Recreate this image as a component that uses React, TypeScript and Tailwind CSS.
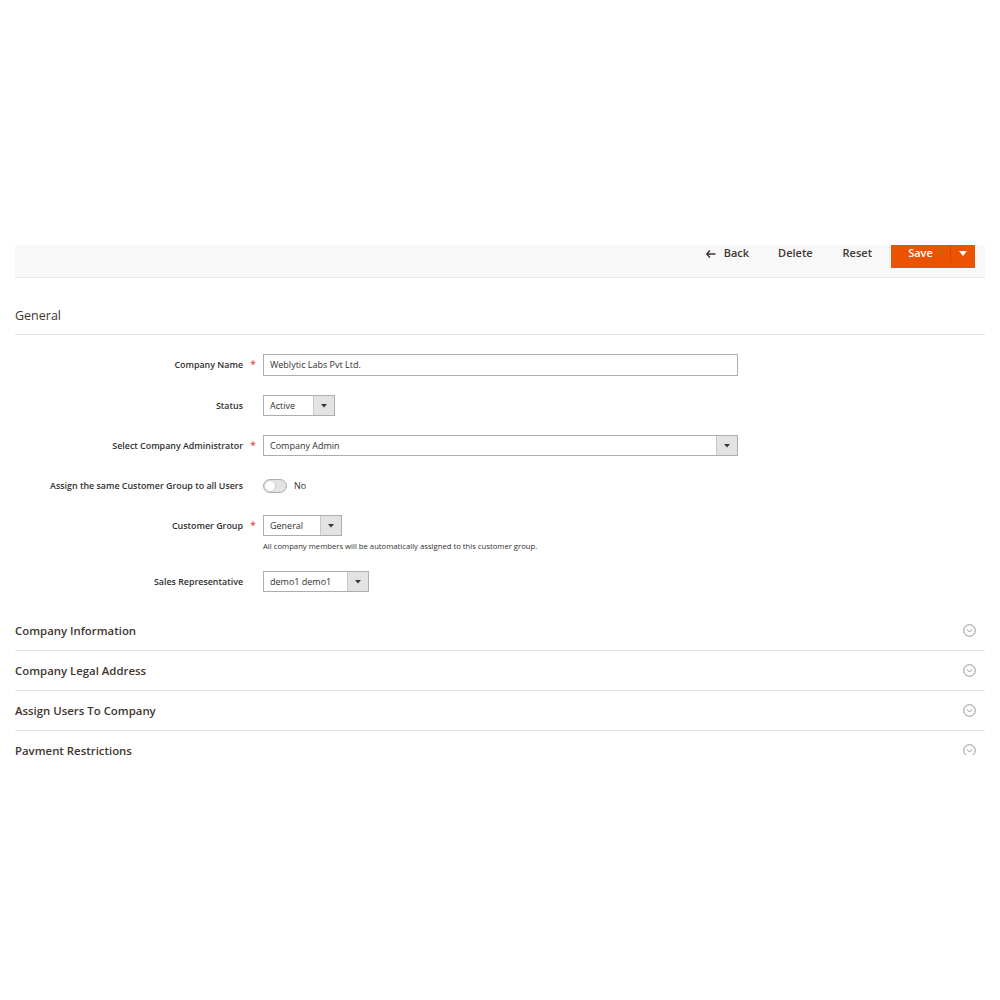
import React from "react";

const Arrow = () => (
  <svg width="6" height="4" viewBox="0 0 6 4">
    <path d="M0 0h6L3 3.5z" fill="#41362f" />
  </svg>
);

const Select = ({ value, width }: { value: string; width: string }) => (
  <div className={`flex h-[21px] border border-[#adadad] bg-white ${width}`}>
    <div className="flex-1 flex items-center pl-[6px] text-[9px] text-[#303030]">{value}</div>
    <div className="w-[21px] flex items-center justify-center bg-[#e3e3e3] border-l border-[#c8c8c8]">
      <Arrow />
    </div>
  </div>
);

const Row = ({ label, required, children }: { label: string; required?: boolean; children: React.ReactNode }) => (
  <div className="flex items-start">
    <div className="w-[228px] h-[21px] flex items-center justify-end text-[8.9px] font-semibold text-[#303030]">{label}</div>
    <div className="w-[20px] h-[21px] flex items-center justify-center text-[10px] text-[#e22626]">
      {required ? "*" : ""}
    </div>
    <div>{children}</div>
  </div>
);

const sections = ["Company Information", "Company Legal Address", "Assign Users To Company", "Payment Restrictions"];

export default function App() {
  return (
    <div className="w-[1000px] h-[1000px] bg-white font-['Open_Sans',sans-serif]">
      <div className="pt-[245px] px-[15px]">
        <div className="h-[510px] overflow-hidden">
          {/* Action bar */}
          <div className="h-[33px] bg-[#f8f8f8] border-b border-[#e8e8e8] flex justify-end items-start pr-[10px]">
            <div className="flex items-start h-[23px] text-[11px] font-semibold text-[#41362f]">
              <span className="flex items-center gap-[8px] mr-[29px] h-[17px]">
                <svg width="10" height="8" viewBox="0 0 10 8">
                  <path d="M4 0.5L0.8 4L4 7.5M1 4h8.5" fill="none" stroke="#41362f" strokeWidth="1.4" />
                </svg>
                Back
              </span>
              <span className="mr-[30px] h-[17px] flex items-center">Delete</span>
              <span className="mr-[19px] h-[17px] flex items-center">Reset</span>
              <div className="flex h-[23px] bg-[#eb5202] text-white">
                <div className="w-[59px] h-[17px] flex items-center justify-center">Save</div>
                <div className="w-[25px] h-[17px] flex items-center justify-center border-l border-[#d24a02]">
                  <svg width="8" height="5" viewBox="0 0 8 5">
                    <path d="M0 0h8L4 5z" fill="#fff" />
                  </svg>
                </div>
              </div>
            </div>
          </div>

          {/* General */}
          <div className="h-[57px] flex items-end border-b border-[#e3e3e3] pb-[8px]">
            <span className="text-[12.5px] text-[#41362f]">General</span>
          </div>

          <div className="pt-[19px] flex flex-col gap-[19px]">
            <Row label="Company Name" required>
              <div className="w-[475px] h-[22px] border border-[#adadad] flex items-center pl-[6px] text-[9px] text-[#303030]">
                Weblytic Labs Pvt Ltd.
              </div>
            </Row>
            <Row label="Status">
              <Select value="Active" width="w-[72px]" />
            </Row>
            <Row label="Select Company Administrator" required>
              <Select value="Company Admin" width="w-[475px]" />
            </Row>
            <Row label="Assign the same Customer Group to all Users">
              <div className="h-[21px] flex items-center gap-[7px]">
                <div className="w-[24px] h-[14px] rounded-full border border-[#adadad] bg-[#e3e3e3] flex items-center">
                  <div className="w-[12px] h-[12px] rounded-full bg-white border border-[#d0d0d0]" />
                </div>
                <span className="text-[9px] text-[#303030]">No</span>
              </div>
            </Row>
            <Row label="Customer Group" required>
              <Select value="General" width="w-[79px]" />
              <div className="mt-[5px] text-[7.7px] leading-[11px] text-[#303030]">
                All company members will be automatically assigned to this customer group.
              </div>
            </Row>
            <Row label="Sales Representative">
              <Select value="demo1 demo1" width="w-[106px]" />
            </Row>
          </div>

          <div className="mt-[19px]">
            {sections.map((s) => (
              <div key={s} className="h-[40px] flex items-center justify-between border-b border-[#e3e3e3] pr-[9px]">
                <span className="text-[11.4px] font-semibold text-[#41362f]">{s}</span>
                <svg width="13" height="13" viewBox="0 0 13 13">
                  <circle cx="6.5" cy="6.5" r="5.8" fill="none" stroke="#8a8a8a" strokeWidth="0.9" />
                  <path d="M4 5.5L6.5 8L9 5.5" fill="none" stroke="#8a8a8a" strokeWidth="0.9" />
                </svg>
              </div>
            ))}
          </div>
        </div>
      </div>
    </div>
  );
}
